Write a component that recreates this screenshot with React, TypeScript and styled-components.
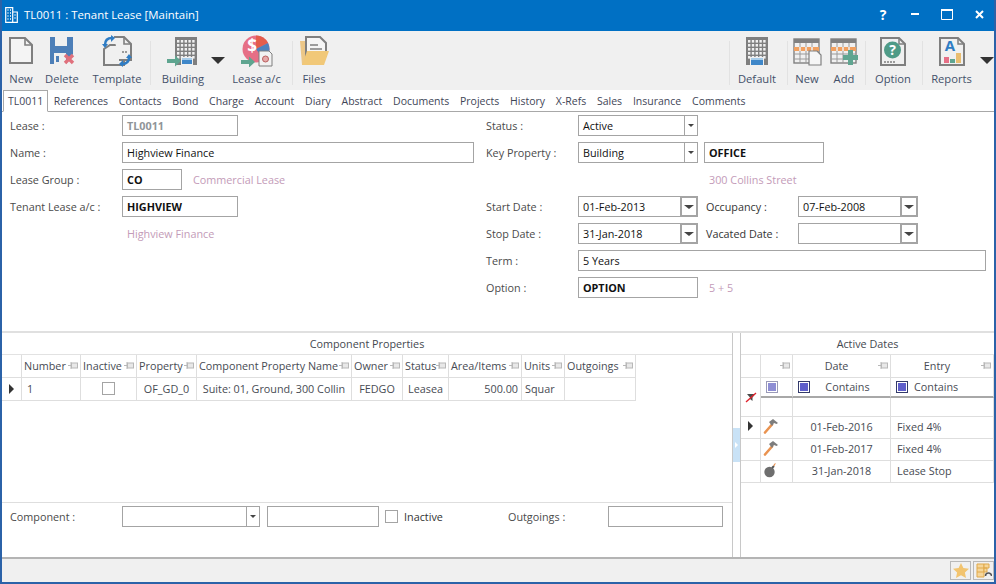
import React from 'react'
import styled, { createGlobalStyle } from 'styled-components'

const GlobalStyle = createGlobalStyle`
  html, body {
    margin: 0;
    padding: 0;
    background: #fff;
  }
  * {
    box-sizing: border-box;
  }
`

const Window = styled.div`
  width: 996px;
  height: 584px;
  display: flex;
  flex-direction: column;
  overflow: hidden;
  background: #fff;
  border: solid #2b62a8;
  border-width: 0 2px 2px 2px;
  font-family: 'Open Sans', 'Noto Sans', sans-serif;
  font-size: 10.8px;
  color: #3a3a3a;
`

const TitleBar = styled.div`
  height: 31px;
  margin: 0 -2px;
  padding: 0 1px 2px 5px;
  display: flex;
  align-items: center;
  background: #0070c4;
  color: #fff;
`

const TitleText = styled.div`
  margin-left: 6px;
  flex: 1;
  font-size: 11.4px;
`

const WinButton = styled.div`
  width: 32px;
  display: flex;
  justify-content: center;
  align-items: center;
  font-weight: 700;
  font-size: 14px;
`

const Toolbar = styled.div`
  height: 59px;
  display: flex;
  background: #f0f0f0;
`

const ToolButton = styled.div<{ $w: number }>`
  width: ${(p) => p.$w}px;
  display: flex;
  flex-direction: column;
  align-items: center;
  padding-top: 4px;
  font-size: 11.2px;
  color: #44506a;
  white-space: nowrap;
`

const ToolLabel = styled.div`
  margin-top: 3px;
  line-height: 18px;
`

const ToolSep = styled.div<{ $left: number; $right?: number }>`
  width: 1px;
  height: 44px;
  margin: 10px ${(p) => p.$right ?? 0}px 0 ${(p) => p.$left}px;
  background: #e2e2e2;
`

const ToolArrow = styled.div`
  width: 14px;
  flex: none;
  height: 7px;
  margin-top: 26px;
  border-style: solid;
  border-width: 7px 7px 0 7px;
  border-color: #333 transparent transparent transparent;
`

const Spacer = styled.div`
  flex: 1;
`

const Tabs = styled.div`
  height: 22px;
  display: flex;
  align-items: flex-end;
  padding-left: 1px;
  border-bottom: 1px solid #a8a8a8;
  font-size: 10.5px;
`

const Tab = styled.div<{ $active?: boolean }>`
  height: ${(p) => (p.$active ? 22 : 21)}px;
  line-height: 20px;
  padding: 0 ${(p) => (p.$active ? 4 : 4.4)}px;
  color: #3f4657;
  white-space: nowrap;
  background: #fff;
  border: ${(p) => (p.$active ? '1px solid #a8a8a8' : '1px solid transparent')};
  border-bottom: ${(p) => (p.$active ? '1px solid #fff' : 'none')};
  margin-bottom: ${(p) => (p.$active ? -1 : 0)}px;
`

const Form = styled.div`
  height: 219px;
  display: flex;
`

const FormColumn = styled.div<{ $w: number }>`
  width: ${(p) => p.$w}px;
  flex: none;
  padding-left: 8px;
`

const Row = styled.div`
  height: 27px;
  display: flex;
  align-items: center;
`

const Label = styled.div<{ $w: number }>`
  width: ${(p) => p.$w}px;
  flex: none;
  color: #4a4a4a;
  white-space: nowrap;
`

const Field = styled.div<{ $w: number; $bold?: boolean; $muted?: boolean; $left?: number }>`
  width: ${(p) => p.$w}px;
  height: 21px;
  flex: none;
  margin-left: ${(p) => p.$left ?? 0}px;
  padding-left: 4px;
  display: flex;
  align-items: center;
  border: 1px solid #a4a4a4;
  background: #fff;
  font-weight: ${(p) => (p.$bold ? 700 : 400)};
  color: ${(p) => (p.$muted ? '#8f9498' : '#111')};
  white-space: nowrap;
`

const ComboButton = styled.div`
  width: 13px;
  height: 100%;
  margin-left: auto;
  flex: none;
  display: flex;
  align-items: center;
  justify-content: center;
  border-left: 1px solid #a4a4a4;
  &::after {
    content: '';
    border-style: solid;
    border-width: 3px 3px 0 3px;
    border-color: #444 transparent transparent transparent;
  }
`

const DateButton = styled.div`
  width: 18px;
  height: 21px;
  margin: -1px -1px -1px auto;
  flex: none;
  display: flex;
  align-items: center;
  justify-content: center;
  border: 2px solid #a4a4a4;
  background: #fff;
  &::after {
    content: '';
    border-style: solid;
    border-width: 4px 5px 0 5px;
    border-color: #444 transparent transparent transparent;
  }
`

const Note = styled.div<{ $left?: number }>`
  margin-left: ${(p) => p.$left ?? 0}px;
  color: #c39bb8;
  white-space: nowrap;
`

const Panels = styled.div`
  height: 228px;
  display: flex;
  border-top: 2px solid #e0e0e0;
  border-bottom: 2px solid #b4b4b4;
`

const Panel = styled.div<{ $w: number }>`
  width: ${(p) => p.$w}px;
  flex: none;
  display: flex;
  flex-direction: column;
`

const PanelTitle = styled.div`
  height: 22px;
  line-height: 21px;
  text-align: center;
  color: #44484f;
  border-bottom: 1px solid #e2e2e2;
`

const Splitter = styled.div`
  width: 9px;
  flex: none;
  display: flex;
  align-items: center;
  border-left: 1px solid #c8c8c8;
  border-right: 1px solid #c8c8c8;
`

const SplitterGrip = styled.div`
  width: 100%;
  height: 34px;
  display: flex;
  align-items: center;
  justify-content: center;
  background: #c9e2f6;
  &::after {
    content: '';
    border-style: solid;
    border-width: 3px 0 3px 3px;
    border-color: transparent transparent transparent #fff;
  }
`

const Grid = styled.div<{ $columns: string; $rows: string }>`
  display: grid;
  grid-template-columns: ${(p) => p.$columns};
  grid-template-rows: ${(p) => p.$rows};
  flex: none;
`

const Cell = styled.div<{
  $align?: string
  $pad?: number
  $span?: number
  $strong?: boolean
  $lift?: number
}>`
  display: flex;
  align-items: center;
  justify-content: ${(p) => p.$align ?? 'flex-start'};
  padding: 0 ${(p) => p.$pad ?? 3}px ${(p) => p.$lift ?? 1}px;
  grid-row: ${(p) => (p.$span ? `span ${p.$span}` : 'auto')};
  border-right: 1px solid #dedede;
  border-bottom: ${(p) => (p.$strong ? '2px solid #a8a8a8' : '1px solid #dedede')};
  color: #474b53;
  white-space: nowrap;
  overflow: hidden;
`

const HeaderCell = styled(Cell)`
  justify-content: space-between;
  padding: 0 2px 1px 2px;
`

const HeaderText = styled.span<{ $center?: boolean }>`
  flex: ${(p) => (p.$center ? 1 : 'none')};
  text-align: ${(p) => (p.$center ? 'center' : 'left')};
`

const BlankLead = styled.div`
  height: 100%;
`

const FilterText = styled.span<{ $center?: boolean }>`
  flex: ${(p) => (p.$center ? 1 : 'none')};
  margin-left: ${(p) => (p.$center ? 0 : 6)}px;
  text-align: center;
`

const RowMarker = styled.div`
  border-style: solid;
  border-width: 5px 0 5px 5px;
  border-color: transparent transparent transparent #333;
`

const CheckBox = styled.div<{ $left?: number }>`
  width: 13px;
  height: 13px;
  flex: none;
  margin-left: ${(p) => p.$left ?? 0}px;
  border: 1px solid #a4a4a4;
  background: #fff;
`

const FilterBox = styled.div<{ $light?: boolean }>`
  width: 12px;
  height: 12px;
  flex: none;
  display: flex;
  align-items: center;
  justify-content: center;
  border: 1px solid ${(p) => (p.$light ? '#9a9ab8' : '#333a6b')};
  &::after {
    content: '';
    width: 8px;
    height: 8px;
    background: ${(p) => (p.$light ? '#8d8dd4' : '#5e5ecb')};
  }
`

const PanelFill = styled.div`
  flex: 1;
`

const BottomForm = styled.div`
  height: 55px;
  padding: 3px 0 0 8px;
  border-top: 1px solid #dedede;
  display: flex;
  align-items: flex-start;
`

const BottomRow = styled(Row)`
  width: 100%;
  height: 21px;
`

const InlineText = styled.div<{ $left: number; $w?: number }>`
  margin-left: ${(p) => p.$left}px;
  width: ${(p) => (p.$w ? `${p.$w}px` : 'auto')};
  flex: none;
  color: #333;
  white-space: nowrap;
`

const StatusBar = styled.div`
  flex: 1;
  display: flex;
  justify-content: flex-end;
  align-items: center;
  gap: 2px;
  background: #f0f0f0;
`

const StatusButton = styled.div`
  width: 21px;
  height: 19px;
  display: flex;
  align-items: center;
  justify-content: center;
  border: 1px solid #b9b9b9;
`

const Icon = styled.svg`
  display: block;
  flex: none;
`

const ICON = { width: 32, height: 32, viewBox: '0 0 32 32' }

const NewIcon = () => (
  <Icon {...ICON}>
    <path d="M5 3h15l7 7v18H5z" fill="#f4f4f4" stroke="#7f7f7f" strokeWidth="2" />
    <path d="M20 3v7h7" fill="none" stroke="#7f7f7f" strokeWidth="1.6" />
  </Icon>
)

const DeleteIcon = () => (
  <Icon {...ICON}>
    <path d="M4 2h23v17l-7 10H4z" fill="#4d7fb8" />
    <rect x="9" y="2" width="12" height="9" fill="#f0f0f0" />
    <rect x="8" y="18" width="12" height="11" fill="#f0f0f0" />
    <rect x="10" y="21" width="3" height="6" fill="#4d7fb8" />
    <path d="M19 20l8 8M27 20l-8 8" stroke="#e0707c" strokeWidth="3.4" />
  </Icon>
)

const TemplateIcon = () => (
  <Icon {...ICON}>
    <path d="M9 10h9l5 5v15H3V14z" fill="#f0f0f0" stroke="#7f7f7f" strokeWidth="2" />
    <path d="M13 2h10l7 7v16H18" fill="#f0f0f0" stroke="#7f7f7f" strokeWidth="2" />
    <path d="M23 2v7h7" fill="none" stroke="#7f7f7f" strokeWidth="1.6" />
    <path d="M4 10c0-5 3-7 7-7" fill="none" stroke="#2e7cc4" strokeWidth="2.5" />
    <path d="M10 0l4 3-4 4zM1 9h6l-3 4z" fill="#2e7cc4" />
    <path d="M28 22c0 5-3 7-7 7" fill="none" stroke="#2e7cc4" strokeWidth="2.5" />
    <path d="M22 32l-4-3 4-4zM31 23h-6l3-4z" fill="#2e7cc4" />
    <path d="M21 17h5" stroke="#7f7f7f" strokeWidth="1.5" strokeDasharray="2 1" />
  </Icon>
)

const BuildingShape = ({ x = 7 }: { x?: number }) => {
  const cells = []
  for (let r = 0; r < 5; r++) {
    for (let c = 0; c < 5; c++) {
      cells.push(<rect key={`${r}-${c}`} x={x + 2 + c * 3.8} y={5 + r * 4} width="2.4" height="2.6" fill="#f0f0f0" />)
    }
  }
  return (
    <>
      <rect x={x} y="2" width="22" height="28" fill="#7f7f7f" />
      {cells}
    </>
  )
}

const BuildingIcon = () => (
  <Icon {...ICON}>
    <BuildingShape x={8} />
    <rect x="14" y="22" width="12" height="9" fill="#f0f0f0" />
    <rect x="15" y="23" width="10" height="6" fill="#3f87c9" />
    <rect x="15" y="23" width="10" height="2" fill="#a8cdea" />
    <path d="M0 24h8v-3.500l6 5.500-6 5.500V28H0z" fill="#5fa590" />
  </Icon>
)

const LeaseIcon = () => (
  <Icon {...ICON}>
    <circle cx="15" cy="14" r="13.5" fill="#e66f86" />
    <path d="M15 14V.5A13.5 13.5 0 0 1 27 8z" fill="#e35d4c" />
    <path d="M15 14l12-6a13.5 13.5 0 0 1-4 17z" fill="#4d82bd" />
    <text x="11" y="17" fontSize="17" fontWeight="700" textAnchor="middle" fill="#fff" fontFamily="Open Sans">$</text>
    <path d="M0 25h8v-3.500l6 5.500-6 5.500V29H0z" fill="#5fa590" />
    <path d="M18 16h10l3 3v12H18z" fill="#f2f2f2" stroke="#7f7f7f" />
    <circle cx="24.500" cy="24" r="3" fill="#e7a9a9" stroke="#b85f5f" />
  </Icon>
)

const FilesIcon = () => (
  <Icon {...ICON}>
    <path d="M2 6h8v24H4z" fill="#ecc788" />
    <path d="M8 2h14l6 6v13H8z" fill="#f5f5f5" stroke="#7f7f7f" strokeWidth="2" />
    <path d="M12 10h8M12 14h12M12 18h12" stroke="#7f7f7f" strokeWidth="1.5" />
    <path d="M9 16h22l-5 14H4z" fill="#f1c878" />
  </Icon>
)

const DefaultIcon = () => (
  <Icon {...ICON}>
    <BuildingShape x={5} />
    <rect x="9" y="22" width="14" height="8" fill="#f0f0f0" />
    <rect x="10" y="23" width="12" height="7" fill="#3f87c9" />
    <rect x="10" y="23" width="12" height="2" fill="#a8cdea" />
  </Icon>
)

const Calendar = () => (
  <>
    <rect x="3" y="4" width="25" height="24" fill="#f0f0f0" stroke="#808080" strokeWidth="1.4" />
    <rect x="3" y="4" width="25" height="4" fill="#808080" />
    <path d="M3 14h25M3 19h25M3 24h25M9 8v20M15 8v20M21 8v20" stroke="#9a9a9a" strokeWidth="1" />
    <rect x="3" y="12" width="25" height="4" fill="#f0a060" />
    <path d="M9 12v4M15 12v4M21 12v4" stroke="#f0f0f0" strokeWidth="1.500" />
  </>
)

const CalendarNewIcon = () => (
  <Icon {...ICON}>
    <Calendar />
    <path d="M18 16h8l4 4v10H18z" fill="#f6f6f6" stroke="#808080" strokeWidth="1.2" />
  </Icon>
)

const CalendarAddIcon = () => (
  <Icon {...ICON}>
    <Calendar />
    <path d="M20 15h5v5h5v5h-5v5h-5v-5h-5v-5h5z" fill="#5fa590" />
  </Icon>
)

const OptionIcon = () => (
  <Icon {...ICON}>
    <path d="M4 3h18l6 6v21H4z" fill="#f0f0f0" stroke="#7f7f7f" strokeWidth="2" />
    <path d="M22 3v6h6" fill="none" stroke="#7f7f7f" strokeWidth="1.5" />
    <circle cx="15.500" cy="15" r="8.500" fill="#4f9b87" />
    <text x="15.500" y="20" fontSize="14" fontWeight="700" textAnchor="middle" fill="#fff" fontFamily="Open Sans">?</text>
    <path d="M7 27h12" stroke="#7f7f7f" strokeWidth="1.5" strokeDasharray="2 1" />
  </Icon>
)

const ReportsIcon = () => (
  <Icon {...ICON}>
    <path d="M4 3h18l6 6v21H4z" fill="#f0f0f0" stroke="#7f7f7f" strokeWidth="2" />
    <path d="M22 3v6h6" fill="none" stroke="#7f7f7f" strokeWidth="1.5" />
    <text x="14" y="16" fontSize="15" fontWeight="700" textAnchor="middle" fill="#2e7cc4" fontFamily="Open Sans">A</text>
    <rect x="8" y="22" width="5" height="6" fill="#e66f86" />
    <rect x="14" y="24" width="5" height="4" fill="#5fa590" />
    <rect x="20" y="18" width="5" height="10" fill="#e9bd6f" />
  </Icon>
)

const PinIcon = () => (
  <Icon width="10" height="7" viewBox="0 0 10 7">
    <path d="M0 3.500h3" stroke="#b8b8b8" strokeWidth="1" />
    <rect x="3.500" y="1" width="6" height="5" fill="#e8e8e8" stroke="#b8b8b8" />
    <rect x="2.500" y="0" width="1" height="7" fill="#b8b8b8" />
  </Icon>
)

const NoPinIcon = () => (
  <Icon width="12" height="12" viewBox="0 0 12 12">
    <path d="M2 3h8L7.500 6.500V10L5 8V6.500z" fill="#4a4a4a" />
    <path d="M1 11L11 2" stroke="#e0222c" strokeWidth="1.4" />
  </Icon>
)

const HammerIcon = () => (
  <Icon width="16" height="16" viewBox="0 0 16 16">
    <path d="M2 14.500L9 6.500" stroke="#ea9350" strokeWidth="2.600" strokeLinecap="round" />
    <path d="M6 4l4-3 5 4-1.500 1-2.500-1-2 3z" fill="#7d7d7d" />
  </Icon>
)

const BombIcon = () => (
  <Icon width="16" height="16" viewBox="0 0 16 16">
    <circle cx="6.500" cy="10" r="5.200" fill="#6e6e6e" />
    <path d="M9 6l2-2" stroke="#555" strokeWidth="2" />
    <path d="M11 4c0-1 .5-2 1.500-2.500" fill="none" stroke="#ea9350" strokeWidth="1.200" />
  </Icon>
)

const StarIcon = () => (
  <Icon width="16" height="15" viewBox="0 0 16 15">
    <path d="M8 0l2.400 5 5.600.7-4.100 3.800 1.100 5.500L8 12.300 3 15l1.100-5.500L0 5.700 5.600 5z" fill="#f2c46f" />
  </Icon>
)

const LayoutIcon = () => (
  <Icon width="16" height="15" viewBox="0 0 16 15">
    <path d="M1 1h7v13H1z" fill="#f6d69a" stroke="#e0a94a" />
    <path d="M8 1h5v4H8zM8 5h3v4H8z" fill="#f6d69a" stroke="#e0a94a" />
    <path d="M1 5h7M1 9h7" stroke="#e0a94a" />
    <path d="M9.500 13a3 3 0 0 1 6 0" fill="none" stroke="#555" strokeWidth="1.500" />
  </Icon>
)

const tabNames = [
  'References', 'Contacts', 'Bond', 'Charge', 'Account', 'Diary', 'Abstract',
  'Documents', 'Projects', 'History', 'X-Refs', 'Sales', 'Insurance', 'Comments',
]

const leftColumns = [
  { name: 'Number', w: 59 },
  { name: 'Inactive', w: 56 },
  { name: 'Property', w: 60 },
  { name: 'Component Property Name', w: 155 },
  { name: 'Owner', w: 51 },
  { name: 'Status', w: 46 },
  { name: 'Area/Items', w: 73 },
  { name: 'Units', w: 43 },
  { name: 'Outgoings', w: 71 },
]

const dates = [
  { date: '01-Feb-2016', entry: 'Fixed 4%', bomb: false, current: true },
  { date: '01-Feb-2017', entry: 'Fixed 4%', bomb: false, current: false },
  { date: '31-Jan-2018', entry: 'Lease Stop', bomb: true, current: false },
]

const App = () => {
  return (
    <Window>
      <GlobalStyle />
      <TitleBar>
        <Icon width="13" height="16" viewBox="0 0 13 16">
          <path d="M.7.7h7v14.600h-7zM7.700 5h4.600v10.300H7.700" fill="none" stroke="#fff" strokeWidth="1.200" />
          <path d="M2.500 3h1M5 3h1M2.500 6h1M5 6h1M2.500 9h1M5 9h1M2.500 12h1M5 12h1M9.500 8h1M9.500 11h1" stroke="#fff" strokeWidth="1.400" />
        </Icon>
        <TitleText>TL0011 : Tenant Lease [Maintain]</TitleText>
        <WinButton>?</WinButton>
        <WinButton>
          <Icon width="9" height="3" viewBox="0 0 9 3"><rect y="0" width="8" height="2" fill="#fff" /></Icon>
        </WinButton>
        <WinButton>
          <Icon width="12" height="11" viewBox="0 0 12 11">
            <path d="M.5 1.500h11v9H.500z" fill="none" stroke="#fff" />
            <rect width="12" height="2" fill="#fff" />
          </Icon>
        </WinButton>
        <WinButton>
          <Icon width="9" height="9" viewBox="0 0 9 9">
            <path d="M1 1l7 7M8 1L1 8" stroke="#fff" strokeWidth="2" />
          </Icon>
        </WinButton>
      </TitleBar>

      <Toolbar>
        <ToolButton $w={38}><NewIcon /><ToolLabel>New</ToolLabel></ToolButton>
        <ToolButton $w={44}><DeleteIcon /><ToolLabel>Delete</ToolLabel></ToolButton>
        <ToolButton $w={66}><TemplateIcon /><ToolLabel>Template</ToolLabel></ToolButton>
        <ToolSep $left={0} $right={4} />
        <ToolButton $w={56}><BuildingIcon /><ToolLabel>Building</ToolLabel></ToolButton>
        <ToolArrow />
        <ToolButton $w={63}><LeaseIcon /><ToolLabel>Lease a/c</ToolLabel></ToolButton>
        <ToolSep $left={4} $right={3} />
        <ToolButton $w={36}><FilesIcon /><ToolLabel>Files</ToolLabel></ToolButton>
        <Spacer />
        <ToolSep $left={0} />
        <ToolButton $w={54}><DefaultIcon /><ToolLabel>Default</ToolLabel></ToolButton>
        <ToolSep $left={3} />
        <ToolButton $w={38}><CalendarNewIcon /><ToolLabel>New</ToolLabel></ToolButton>
        <ToolButton $w={36}><CalendarAddIcon /><ToolLabel>Add</ToolLabel></ToolButton>
        <ToolSep $left={3} />
        <ToolButton $w={54}><OptionIcon /><ToolLabel>Option</ToolLabel></ToolButton>
        <ToolSep $left={2} />
        <ToolButton $w={57}><ReportsIcon /><ToolLabel>Reports</ToolLabel></ToolButton>
        <ToolArrow />
      </Toolbar>

      <Tabs>
        <Tab $active>TL0011</Tab>
        {tabNames.map((name) => (
          <Tab key={name}>{name}</Tab>
        ))}
      </Tabs>

      <Form>
        <FormColumn $w={476}>
          <Row>
            <Label $w={112}>Lease :</Label>
            <Field $w={116} $bold $muted>TL0011</Field>
          </Row>
          <Row>
            <Label $w={112}>Name :</Label>
            <Field $w={352}>Highview Finance</Field>
          </Row>
          <Row>
            <Label $w={112}>Lease Group :</Label>
            <Field $w={60} $bold>CO</Field>
            <Note $left={11}>Commercial Lease</Note>
          </Row>
          <Row>
            <Label $w={112}>Tenant Lease a/c :</Label>
            <Field $w={116} $bold>HIGHVIEW</Field>
          </Row>
          <Row>
            <Note $left={117}>Highview Finance</Note>
          </Row>
        </FormColumn>
        <FormColumn $w={514}>
          <Row>
            <Label $w={92}>Status :</Label>
            <Field $w={120}>Active<ComboButton /></Field>
          </Row>
          <Row>
            <Label $w={92}>Key Property :</Label>
            <Field $w={120}>Building<ComboButton /></Field>
            <Field $w={120} $left={6} $bold>OFFICE</Field>
          </Row>
          <Row>
            <Note $left={223}>300 Collins Street</Note>
          </Row>
          <Row>
            <Label $w={92}>Start Date :</Label>
            <Field $w={120}>01-Feb-2013<DateButton /></Field>
            <InlineText $left={8} $w={92}>Occupancy :</InlineText>
            <Field $w={120}>07-Feb-2008<DateButton /></Field>
          </Row>
          <Row>
            <Label $w={92}>Stop Date :</Label>
            <Field $w={120}>31-Jan-2018<DateButton /></Field>
            <InlineText $left={8} $w={92}>Vacated Date :</InlineText>
            <Field $w={120}><DateButton /></Field>
          </Row>
          <Row>
            <Label $w={92}>Term :</Label>
            <Field $w={408}>5 Years</Field>
          </Row>
          <Row>
            <Label $w={92}>Option :</Label>
            <Field $w={120} $bold>OPTION</Field>
            <Note $left={11}>5 + 5</Note>
          </Row>
        </FormColumn>
      </Form>

      <Panels>
        <Panel $w={730}>
          <PanelTitle>Component Properties</PanelTitle>
          <Grid
            $columns={`20px ${leftColumns.map((c) => `${c.w}px`).join(' ')}`}
            $rows="23px 23px"
          >
            <Cell />
            {leftColumns.map((c) => (
              <HeaderCell key={c.name}>
                <HeaderText>{c.name}</HeaderText>
                <PinIcon />
              </HeaderCell>
            ))}
            <Cell $align="center"><RowMarker /></Cell>
            <Cell $pad={5}>1</Cell>
            <Cell $align="center"><CheckBox /></Cell>
            <Cell $align="center">OF_GD_0</Cell>
            <Cell $align="center">Suite: 01, Ground, 300 Collin</Cell>
            <Cell $align="center">FEDGO</Cell>
            <Cell $align="center">Leasea</Cell>
            <Cell $align="flex-end">500.00</Cell>
            <Cell>Squar</Cell>
            <Cell />
          </Grid>
          <PanelFill />
          <BottomForm>
            <BottomRow>
              <Label $w={112}>Component :</Label>
              <Field $w={138}><ComboButton /></Field>
              <Field $w={112} $left={7} />
              <CheckBox $left={6} />
              <InlineText $left={6} $w={104}>Inactive</InlineText>
              <Label $w={100}>Outgoings :</Label>
              <Field $w={115} />
            </BottomRow>
          </BottomForm>
        </Panel>
        <Splitter><SplitterGrip /></Splitter>
        <Panel $w={253}>
          <PanelTitle>Active Dates</PanelTitle>
          <Grid $columns="20px 32px 98px 103px" $rows="23px 20px 19px 22px 22px 22px">
            <Cell />
            <HeaderCell><BlankLead /><PinIcon /></HeaderCell>
            <HeaderCell><HeaderText $center>Date</HeaderText><PinIcon /></HeaderCell>
            <HeaderCell><HeaderText $center>Entry</HeaderText><PinIcon /></HeaderCell>

            <Cell $span={2} $align="center" $pad={0}><NoPinIcon /></Cell>
            <Cell $pad={5} $strong><FilterBox $light /></Cell>
            <Cell $pad={5} $strong><FilterBox /><FilterText $center>Contains</FilterText></Cell>
            <Cell $pad={5} $strong><FilterBox /><FilterText>Contains</FilterText></Cell>

            <Cell />
            <Cell />
            <Cell />

            {dates.map((d) => (
              <React.Fragment key={d.date}>
                <Cell $align="center" $pad={0} $lift={3}>{d.current && <RowMarker />}</Cell>
                <Cell $pad={2} $lift={3}>{d.bomb ? <BombIcon /> : <HammerIcon />}</Cell>
                <Cell $align="center" $lift={3}>{d.date}</Cell>
                <Cell $pad={6} $lift={3}>{d.entry}</Cell>
              </React.Fragment>
            ))}
          </Grid>
        </Panel>
      </Panels>

      <StatusBar>
        <StatusButton><StarIcon /></StatusButton>
        <StatusButton><LayoutIcon /></StatusButton>
      </StatusBar>
    </Window>
  )
}

export default App
